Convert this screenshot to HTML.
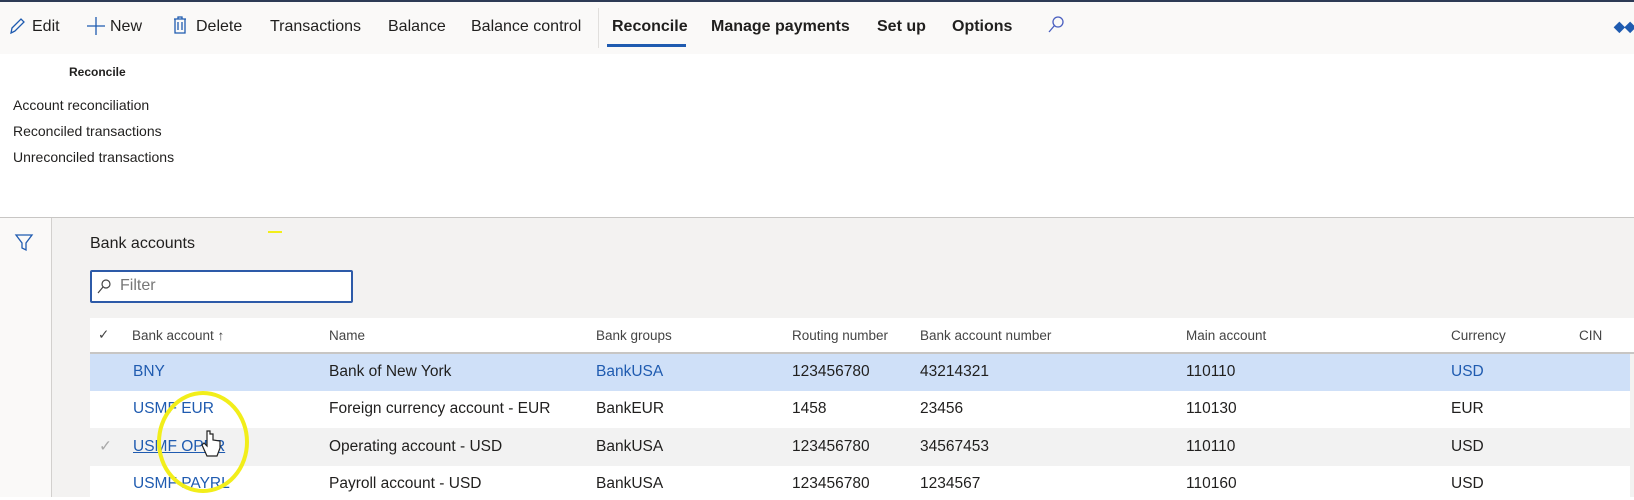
<!DOCTYPE html>
<html><head><meta charset="utf-8"><style>
*{margin:0;padding:0;box-sizing:border-box}
body{width:1634px;height:497px;overflow:hidden;background:#fff;font-family:"Liberation Sans",sans-serif;color:#201f1e;position:relative}
.a{position:absolute;white-space:nowrap}
.tb{font-size:16px;top:18px}
.link{color:#1f5bb0}
</style></head><body>
<div class="a" style="left:0;top:0;width:1634px;height:2px;background:#2d3a55"></div>
<div class="a" style="left:0;top:2px;width:1634px;height:52px;background:#faf9f8"></div>
<svg class="a" style="left:8px;top:16px" width="18" height="20" viewBox="0 0 18 20"><path d="M3 17 L4 12 L13 3 L16 6 L7 15 Z M3 17 L7 15" fill="none" stroke="#1f5bb0" stroke-width="1.3"/></svg>
<div class="a tb" style="left:32px">Edit</div>
<svg class="a" style="left:86px;top:16px" width="20" height="20"><path d="M10 1V19M1 10H19" stroke="#1f5bb0" stroke-width="1.3"/></svg>
<div class="a tb" style="left:110px">New</div>
<svg class="a" style="left:172px;top:15px" width="16" height="20"><path d="M2 4H14M6 4V2H10V4M3 4V18H13V4M6 7V15M10 7V15" fill="none" stroke="#1f5bb0" stroke-width="1.3"/></svg>
<div class="a tb" style="left:196px">Delete</div>
<div class="a tb" style="left:270px">Transactions</div>
<div class="a tb" style="left:388px">Balance</div>
<div class="a tb" style="left:471px">Balance control</div>
<div class="a" style="left:598px;top:8px;width:1px;height:40px;background:#e1dfdd"></div>
<div class="a tb" style="left:612px;font-weight:bold">Reconcile</div>
<div class="a" style="left:607px;top:44px;width:79px;height:3px;background:#1f5bb0"></div>
<div class="a tb" style="left:711px;font-weight:bold">Manage payments</div>
<div class="a tb" style="left:877px;font-weight:bold">Set up</div>
<div class="a tb" style="left:952px;font-weight:bold">Options</div>
<svg class="a" style="left:1046px;top:15px" width="20" height="20"><circle cx="12" cy="7" r="5" fill="none" stroke="#4a5fc0" stroke-width="1.3"/><path d="M8.5 10.5L3 17" stroke="#4a5fc0" stroke-width="1.3"/></svg>
<div class="a" style="left:1614px;top:18px;color:#1f5bb0;font-size:14px;font-weight:bold">◆◆</div>
<div class="a" style="left:69px;top:65px;font-size:12px;font-weight:bold">Reconcile</div>
<div class="a" style="left:13px;top:97px;font-size:14px">Account reconciliation</div>
<div class="a" style="left:13px;top:123px;font-size:14px">Reconciled transactions</div>
<div class="a" style="left:13px;top:149px;font-size:14px">Unreconciled transactions</div>
<div class="a" style="left:0;top:217px;width:1634px;height:280px;background:#f3f2f1;border-top:1px solid #c8c6c4"></div>
<div class="a" style="left:0;top:218px;width:52px;height:279px;background:#faf9f8;border-right:1px solid #d2d0ce"></div>
<svg class="a" style="left:14px;top:233px" width="20" height="20"><path d="M2 2H18L12 10V17L8 15V10Z" fill="none" stroke="#1f5bb0" stroke-width="1.3"/></svg>
<div class="a" style="left:90px;top:235px;font-size:16px">Bank accounts</div>
<div class="a" style="left:90px;top:270px;width:263px;height:33px;background:#fff;border:2px solid #2d5aa8;border-radius:2px"></div>
<svg class="a" style="left:96px;top:278px" width="16" height="18"><circle cx="10" cy="6" r="4" fill="none" stroke="#444" stroke-width="1.2"/><path d="M7 9L2 15" stroke="#444" stroke-width="1.2"/></svg>
<div class="a" style="left:120px;top:277px;font-size:16px;color:#777">Filter</div>
<div class="a" style="left:90px;top:318px;width:1544px;height:36px;background:#fff;border-bottom:2px solid #c8c6c4"></div>
<div class="a" style="left:90px;top:354px;width:1540px;height:37px;background:#cfe0f8"></div>
<div class="a" style="left:90px;top:391px;width:1540px;height:37px;background:#fff"></div>
<div class="a" style="left:90px;top:428px;width:1540px;height:38px;background:#f2f2f2"></div>
<div class="a" style="left:90px;top:466px;width:1540px;height:31px;background:#fff"></div>
<div class="a" style="top:327px;font-size:13.5px;color:#444;left:98px">✓</div>
<div class="a" style="top:328px;font-size:13.5px;color:#444;left:132px">Bank account ↑</div>
<div class="a" style="top:328px;font-size:13.5px;color:#444;left:329px">Name</div>
<div class="a" style="top:328px;font-size:13.5px;color:#444;left:596px">Bank groups</div>
<div class="a" style="top:328px;font-size:13.5px;color:#444;left:792px">Routing number</div>
<div class="a" style="top:328px;font-size:13.5px;color:#444;left:920px">Bank account number</div>
<div class="a" style="top:328px;font-size:13.5px;color:#444;left:1186px">Main account</div>
<div class="a" style="top:328px;font-size:13.5px;color:#444;left:1451px">Currency</div>
<div class="a" style="top:328px;font-size:13.5px;color:#444;left:1579px">CIN</div>
<div style="font-size:15.5px">
<div class="a link" style="top:363px;left:133px">BNY</div><div class="a" style="top:363px;left:329px">Bank of New York</div><div class="a link" style="top:363px;left:596px">BankUSA</div><div class="a" style="top:363px;left:792px">123456780</div><div class="a" style="top:363px;left:920px">43214321</div><div class="a" style="top:363px;left:1186px">110110</div><div class="a link" style="top:363px;left:1451px">USD</div>
<div class="a link" style="top:400px;left:133px">USMF EUR</div><div class="a" style="top:400px;left:329px">Foreign currency account - EUR</div><div class="a" style="top:400px;left:596px">BankEUR</div><div class="a" style="top:400px;left:792px">1458</div><div class="a" style="top:400px;left:920px">23456</div><div class="a" style="top:400px;left:1186px">110130</div><div class="a" style="top:400px;left:1451px">EUR</div>
<div class="a" style="top:437px;left:99px;color:#aaa">✓</div>
<div class="a link" style="top:438px;left:133px;text-decoration:underline">USMF OPER</div><div class="a" style="top:438px;left:329px">Operating account - USD</div><div class="a" style="top:438px;left:596px">BankUSA</div><div class="a" style="top:438px;left:792px">123456780</div><div class="a" style="top:438px;left:920px">34567453</div><div class="a" style="top:438px;left:1186px">110110</div><div class="a" style="top:438px;left:1451px">USD</div>
<div class="a link" style="top:475px;left:133px">USMF PAYRL</div><div class="a" style="top:475px;left:329px">Payroll account - USD</div><div class="a" style="top:475px;left:596px">BankUSA</div><div class="a" style="top:475px;left:792px">123456780</div><div class="a" style="top:475px;left:920px">1234567</div><div class="a" style="top:475px;left:1186px">110160</div><div class="a" style="top:475px;left:1451px">USD</div>
</div>
<svg class="a" style="left:150px;top:390px" width="110" height="110"><ellipse cx="53" cy="52" rx="44" ry="49" fill="none" stroke="#f2ee1a" stroke-width="4"/><path d="M57 41V56L54 53L52 55L57 66H67L70 58V51L63 50V44L60 44V41Z" fill="#fff" stroke="#222" stroke-width="1.2"/></svg>
<div class="a" style="left:268px;top:231px;width:14px;height:2px;background:#f2ee1a"></div>
</body></html>
